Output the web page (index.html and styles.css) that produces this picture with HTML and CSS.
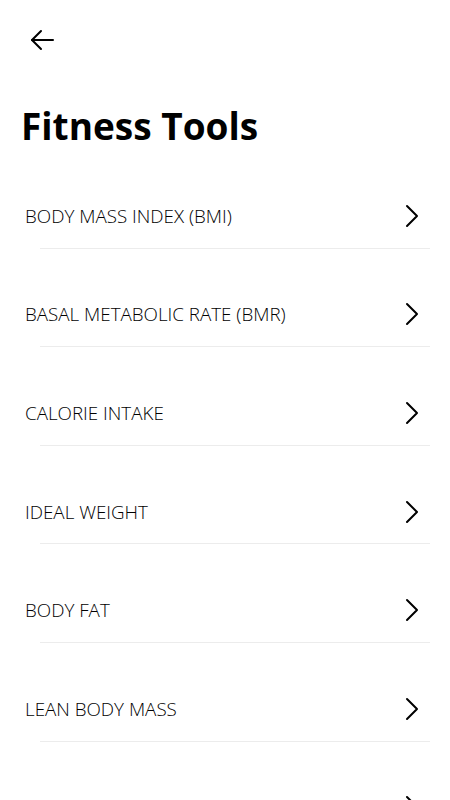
FILE: index.html
```html
<!DOCTYPE html>
<html lang="en">
<head>
    <meta charset="UTF-8">
    <meta name="viewport" content="width=device-width, initial-scale=1.0">
    <title>Fitness Tools</title>
    <link rel="stylesheet" href="styles.css">
</head>
<body>
    <div class="screen">
        <div class="topbar">
            <button class="back" aria-label="Back">
                <svg width="26" height="24" viewBox="0 0 26 24" fill="none" stroke="#000" stroke-width="2" stroke-linecap="round" stroke-linejoin="round">
                    <path d="M24 12H3"/>
                    <path d="M12 3l-9 9 9 9"/>
                </svg>
            </button>
        </div>

        <h1 class="title">Fitness Tools</h1>

        <ul class="tools">
            <li class="tool">
                <div class="tool-row">
                    <span>BODY MASS INDEX (BMI)</span>
                    <svg class="chev" width="14" height="24" viewBox="0 0 14 24" fill="none" stroke="#000" stroke-width="2" stroke-linecap="round" stroke-linejoin="round"><path d="M2 2l10 10-10 10"/></svg>
                </div>
                <div class="tool-line"></div>
            </li>
            <li class="tool">
                <div class="tool-row">
                    <span>BASAL METABOLIC RATE (BMR)</span>
                    <svg class="chev" width="14" height="24" viewBox="0 0 14 24" fill="none" stroke="#000" stroke-width="2" stroke-linecap="round" stroke-linejoin="round"><path d="M2 2l10 10-10 10"/></svg>
                </div>
                <div class="tool-line"></div>
            </li>
            <li class="tool">
                <div class="tool-row">
                    <span>CALORIE INTAKE</span>
                    <svg class="chev" width="14" height="24" viewBox="0 0 14 24" fill="none" stroke="#000" stroke-width="2" stroke-linecap="round" stroke-linejoin="round"><path d="M2 2l10 10-10 10"/></svg>
                </div>
                <div class="tool-line"></div>
            </li>
            <li class="tool">
                <div class="tool-row">
                    <span>IDEAL WEIGHT</span>
                    <svg class="chev" width="14" height="24" viewBox="0 0 14 24" fill="none" stroke="#000" stroke-width="2" stroke-linecap="round" stroke-linejoin="round"><path d="M2 2l10 10-10 10"/></svg>
                </div>
                <div class="tool-line"></div>
            </li>
            <li class="tool">
                <div class="tool-row">
                    <span>BODY FAT</span>
                    <svg class="chev" width="14" height="24" viewBox="0 0 14 24" fill="none" stroke="#000" stroke-width="2" stroke-linecap="round" stroke-linejoin="round"><path d="M2 2l10 10-10 10"/></svg>
                </div>
                <div class="tool-line"></div>
            </li>
            <li class="tool">
                <div class="tool-row">
                    <span>LEAN BODY MASS</span>
                    <svg class="chev" width="14" height="24" viewBox="0 0 14 24" fill="none" stroke="#000" stroke-width="2" stroke-linecap="round" stroke-linejoin="round"><path d="M2 2l10 10-10 10"/></svg>
                </div>
                <div class="tool-line"></div>
            </li>
            <li class="tool">
                <div class="tool-row">
                    <span></span>
                    <svg class="chev" width="14" height="24" viewBox="0 0 14 24" fill="none" stroke="#000" stroke-width="2" stroke-linecap="round" stroke-linejoin="round"><path d="M2 2l10 10-10 10"/></svg>
                </div>
                <div class="tool-line"></div>
            </li>
        </ul>
    </div>
</body>
</html>
```

FILE: styles.css
```css
body {
    margin: 0;
    padding: 0;
    background-color: #fff;
    font-family: "Open Sans", "Liberation Sans", sans-serif;
    color: #000;
}
.screen {
    width: 450px;
    height: 800px;
    overflow: hidden;
}
.topbar {
    height: 80px;
    display: flex;
    align-items: center;
    padding-left: 29px;
}
.back {
    background: none;
    border: 0;
    padding: 0;
    display: flex;
    cursor: pointer;
}
.title {
    margin: 22px 0 0 0;
    padding-left: 21px;
    font-size: 37px;
    font-weight: 700;
    line-height: 48px;
}
.tools {
    list-style: none;
    margin: 0;
    padding: 0;
}
.tool {
    padding-top: 34px;
}
.tool-row {
    height: 63.6px;
    display: flex;
    align-items: center;
    justify-content: space-between;
    padding: 0 31px 0 25px;
    font-size: 18.8px;
    font-weight: 300;
}
.tool-line {
    height: 1px;
    margin: 0 20px 0 40px;
    background-color: #ececec;
}
```
